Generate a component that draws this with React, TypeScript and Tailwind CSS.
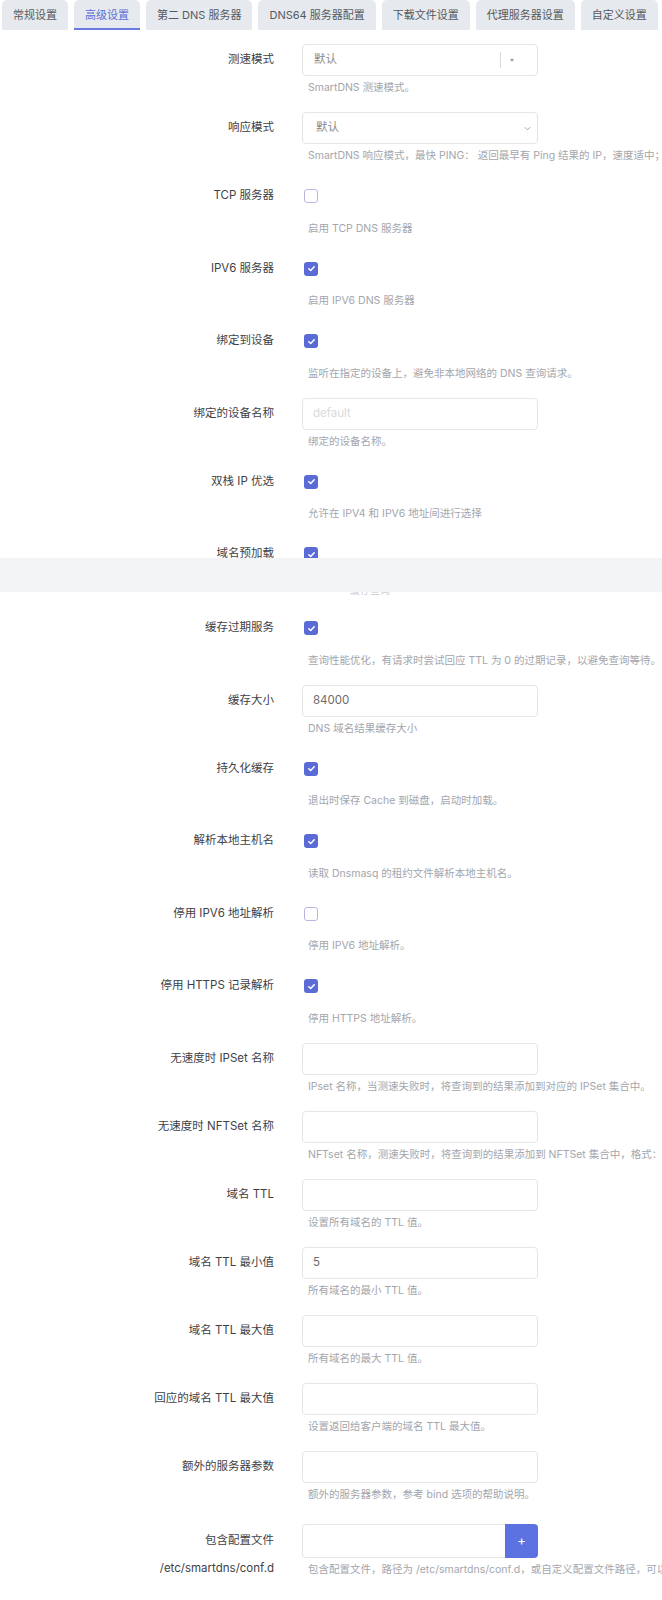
import type { ReactNode } from "react";

const TABS = ["常规设置", "高级设置", "第二 DNS 服务器", "DNS64 服务器配置", "下载文件设置", "代理服务器设置", "自定义设置"];

type Row =
  | { kind: "combo"; label: string; value: string; desc: string }
  | { kind: "select"; label: string; value: string; desc: string }
  | { kind: "check"; label: string; checked: boolean; desc: string }
  | { kind: "input"; label: string; value?: string; placeholder?: string; desc: string }
  | { kind: "list"; label: string; sub: string; desc: string };

const TOP_ROWS: Row[] = [
  { kind: "combo", label: "测速模式", value: "默认", desc: "SmartDNS 测速模式。" },
  {
    kind: "select",
    label: "响应模式",
    value: "默认",
    desc: "SmartDNS 响应模式，最快 PING： 返回最早有 Ping 结果的 IP，速度适中；最快 IP：返回最快 IP，查询请求可能延长；最快响应：返回最先到达的结果。",
  },
  { kind: "check", label: "TCP 服务器", checked: false, desc: "启用 TCP DNS 服务器" },
  { kind: "check", label: "IPV6 服务器", checked: true, desc: "启用 IPV6 DNS 服务器" },
  { kind: "check", label: "绑定到设备", checked: true, desc: "监听在指定的设备上，避免非本地网络的 DNS 查询请求。" },
  { kind: "input", label: "绑定的设备名称", placeholder: "default", desc: "绑定的设备名称。" },
  { kind: "check", label: "双栈 IP 优选", checked: true, desc: "允许在 IPV4 和 IPV6 地址间进行选择" },
  { kind: "check", label: "域名预加载", checked: true, desc: "启用域名预加载，加速常用域名查询速度。" },
];

const BOTTOM_ROWS: Row[] = [
  { kind: "check", label: "缓存过期服务", checked: true, desc: "查询性能优化，有请求时尝试回应 TTL 为 0 的过期记录，以避免查询等待。" },
  { kind: "input", label: "缓存大小", value: "84000", desc: "DNS 域名结果缓存大小" },
  { kind: "check", label: "持久化缓存", checked: true, desc: "退出时保存 Cache 到磁盘，启动时加载。" },
  { kind: "check", label: "解析本地主机名", checked: true, desc: "读取 Dnsmasq 的租约文件解析本地主机名。" },
  { kind: "check", label: "停用 IPV6 地址解析", checked: false, desc: "停用 IPV6 地址解析。" },
  { kind: "check", label: "停用 HTTPS 记录解析", checked: true, desc: "停用 HTTPS 地址解析。" },
  { kind: "input", label: "无速度时 IPSet 名称", desc: "IPset 名称，当测速失败时，将查询到的结果添加到对应的 IPSet 集合中。" },
  {
    kind: "input",
    label: "无速度时 NFTSet 名称",
    desc: "NFTset 名称，测速失败时，将查询到的结果添加到 NFTSet 集合中，格式：[#[4|6]:[family#table#set]]",
  },
  { kind: "input", label: "域名 TTL", desc: "设置所有域名的 TTL 值。" },
  { kind: "input", label: "域名 TTL 最小值", value: "5", desc: "所有域名的最小 TTL 值。" },
  { kind: "input", label: "域名 TTL 最大值", desc: "所有域名的最大 TTL 值。" },
  { kind: "input", label: "回应的域名 TTL 最大值", desc: "设置返回给客户端的域名 TTL 最大值。" },
  { kind: "input", label: "额外的服务器参数", desc: "额外的服务器参数，参考 bind 选项的帮助说明。" },
  {
    kind: "list",
    label: "包含配置文件",
    sub: "/etc/smartdns/conf.d",
    desc: "包含配置文件，路径为 /etc/smartdns/conf.d，或自定义配置文件路径，可以使用通配符。",
  },
];

function Checkbox({ checked }: { checked: boolean }) {
  if (!checked) {
    return <span className="ml-[2px] w-[14px] h-[14px] rounded-[3px] border border-[#bab6e4] bg-white" />;
  }
  return (
    <span className="ml-[2px] w-[14px] h-[14px] rounded-[3px] bg-[#5b6bd6] flex items-center justify-center">
      <svg viewBox="0 0 12 12" className="w-[9px] h-[9px]">
        <path d="M2.4 6.3 L4.9 8.6 L9.6 3.6" stroke="white" strokeWidth="2" fill="none" strokeLinecap="round" strokeLinejoin="round" />
      </svg>
    </span>
  );
}

function Control({ row }: { row: Row }) {
  const box = "h-[32px] w-[236px] rounded-[4px] border border-[#e4e6ea] bg-white flex items-center";
  switch (row.kind) {
    case "combo":
      return (
        <div className={box}>
          <span className="flex-1 pl-[11px] text-[11.5px] text-[#8c8c8c]">{row.value}</span>
          <span className="w-px h-[16px] bg-[#dcdcdc]" />
          <span className="ml-[9px] mr-[23px] w-0 h-0 border-x-[2px] border-x-transparent border-t-[3px] border-t-[#9a9a9a]" />
        </div>
      );
    case "select":
      return (
        <div className={box}>
          <span className="flex-1 pl-[13px] text-[11.5px] text-[#8c8c8c]">{row.value}</span>
          <svg viewBox="0 0 8 5" className="w-[7px] h-[5px] mr-[6px]">
            <path d="M1 1 L4 4 L7 1" stroke="#9a9a9a" strokeWidth="1" fill="none" />
          </svg>
        </div>
      );
    case "check":
      return (
        <div className="h-[32px] flex items-center">
          <Checkbox checked={row.checked} />
        </div>
      );
    case "input":
      return (
        <div className={box}>
          {row.value ? (
            <span className="pl-[10px] text-[11.5px] text-[#6b6b6b]">{row.value}</span>
          ) : (
            <span className="pl-[10px] text-[11.5px] text-[#dadada]">{row.placeholder ?? ""}</span>
          )}
        </div>
      );
    case "list":
      return (
        <div className="h-[34px] w-[236px] flex">
          <div className="flex-1 rounded-l-[4px] border border-r-0 border-[#e4e6ea] bg-white" />
          <div className="w-[33px] rounded-r-[4px] bg-[#5c72e0] flex items-center justify-center text-white text-[13px]">+</div>
        </div>
      );
  }
}

function FormRow({ row }: { row: Row }) {
  const isCheck = row.kind === "check";
  const isList = row.kind === "list";
  let label: ReactNode = row.label;
  return (
    <div className={`flex pb-[17px] ${isList ? "mt-[5px]" : ""}`}>
      <div className="w-[274px] shrink-0 flex flex-col items-end text-[11.5px] text-[#3f3f46]">
        <div className={`${isList ? "h-[34px]" : "h-[32px]"} flex items-center whitespace-nowrap`}>{label}</div>
        {row.kind === "list" && <div className="mt-[3px] leading-[14px] whitespace-nowrap">{row.sub}</div>}
      </div>
      <div className="ml-[28px] w-[236px] shrink-0">
        <Control row={row} />
        <div
          className={`${isCheck ? "mt-[9.5px]" : "mt-[5px]"} ml-[6px] leading-[14px] text-[10.5px] text-[#a3a6ad] whitespace-nowrap`}
        >
          {row.desc}
        </div>
      </div>
    </div>
  );
}

export default function App() {
  return (
    <div className="w-[662px] overflow-hidden bg-white font-['Inter','Noto_Sans_CJK_SC',sans-serif]">
      <div className="flex gap-[6px] pl-[2px] h-[30px]">
        {TABS.map((t, i) => (
          <div
            key={t}
            className={`h-[30px] px-[11px] rounded-t-[5px] bg-[#e6e9ee] flex items-center text-[11px] whitespace-nowrap ${
              i === 1 ? "text-[#5b6fd6] border-b-2 border-[#6a7ddf] pt-[2px]" : "text-[#555a60]"
            }`}
          >
            {t}
          </div>
        ))}
      </div>

      <div className="h-[528px] overflow-hidden pt-[14px]">
        {TOP_ROWS.map((r) => (
          <FormRow key={r.label} row={r} />
        ))}
      </div>

      <div className="h-[34px] bg-[#f3f4f6]" />

      <div className="h-[20px]">
        <div className="h-[5px] overflow-hidden">
          <div className="ml-[350px] -mt-[9px] leading-[14px] text-[10px] text-[#c9cbd0] whitespace-nowrap">缓存查询</div>
        </div>
      </div>

      <div>
        {BOTTOM_ROWS.map((r) => (
          <FormRow key={r.label} row={r} />
        ))}
      </div>
    </div>
  );
}
